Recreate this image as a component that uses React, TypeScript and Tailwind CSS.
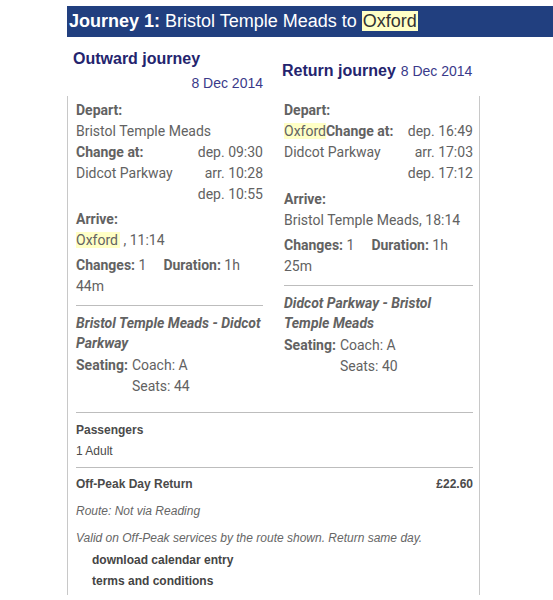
import React from "react";

const arial = { fontFamily: '"Liberation Sans", Arial, sans-serif' };
const roboto = { fontFamily: 'Roboto, "Liberation Sans", Arial, sans-serif' };

function Row({ left, right }: { left?: React.ReactNode; right?: React.ReactNode }) {
  return (
    <div className="flex justify-between h-[21px]">
      <div>{left}</div>
      <div>{right}</div>
    </div>
  );
}

export default function App() {
  return (
    <div className="w-[553px] h-[600px] bg-white overflow-hidden">
      <div className="pt-[6px] pl-[67px]">
        {/* Header bar */}
        <div
          className="h-[31px] bg-[#213f7f] text-white text-[18px] leading-[31px] pl-[2px] whitespace-nowrap"
          style={arial}
        >
          <span className="font-bold">Journey 1:</span> Bristol Temple Meads to{" "}
          <span className="bg-[#ffffc6] text-[#333] px-[1px]">Oxford</span>
        </div>

        {/* Headings */}
        <div className="flex h-[59px]" style={arial}>
          <div className="w-[196px] pt-[12px]">
            <div className="pl-[6px] text-[16px] leading-[20px] font-bold text-[#24246e]">
              Outward journey
            </div>
            <div className="mt-[6px] text-right text-[14px] leading-[16px] text-[#3a3a8a]">
              8 Dec 2014
            </div>
          </div>
          <div className="ml-[19px] pt-[24px] flex items-baseline gap-[5px]">
            <div className="text-[16px] leading-[20px] font-bold text-[#24246e]">Return journey</div>
            <div className="text-[14px] leading-[16px] text-[#3a3a8a]">8 Dec 2014</div>
          </div>
        </div>

        {/* Body box */}
        <div className="w-[413px] h-[499px] border-x border-[#c8c8c8] pl-[8px] pr-[6px] pt-[4px]">
          <div
            className="grid grid-cols-[187px_189px] gap-x-[21px] text-[14px] leading-[21px] text-[#626262]"
            style={roboto}
          >
            {/* Outward */}
            <div>
              <div className="font-bold">Depart:</div>
              <div>Bristol Temple Meads</div>
              <Row left={<span className="font-bold">Change at:</span>} right="dep. 09:30" />
              <Row left="Didcot Parkway" right="arr. 10:28" />
              <Row right="dep. 10:55" />
              <div className="mt-[4px]">
                <div className="font-bold">Arrive:</div>
                <div>
                  <span className="bg-[#ffffc6] pr-[2px]">Oxford</span> , 11:14
                </div>
              </div>
              <div className="mt-[4px]">
                <span className="font-bold">Changes:</span> 1
                <span className="ml-[17px] font-bold">Duration:</span> 1h
                <br />
                44m
              </div>
              <div className="mt-[8px] border-t border-[#bdbdbd]" />
              <div className="mt-[7px] font-bold italic leading-[20px]">
                Bristol Temple Meads - Didcot
                <br />
                Parkway
              </div>
              <div className="mt-[2px] flex">
                <span className="font-bold">Seating:</span>
                <div className="pl-[4px]">
                  <div>Coach: A</div>
                  <div>Seats: 44</div>
                </div>
              </div>
            </div>

            {/* Return */}
            <div>
              <div className="font-bold">Depart:</div>
              <Row
                left={
                  <>
                    <span className="bg-[#ffffc6]">Oxford</span>
                    <span className="font-bold">Change at:</span>
                  </>
                }
                right="dep. 16:49"
              />
              <Row left="Didcot Parkway" right="arr. 17:03" />
              <Row right="dep. 17:12" />
              <div className="mt-[5px]">
                <div className="font-bold">Arrive:</div>
                <div>Bristol Temple Meads, 18:14</div>
              </div>
              <div className="mt-[4px]">
                <span className="font-bold">Changes:</span> 1
                <span className="ml-[17px] font-bold">Duration:</span> 1h
                <br />
                25m
              </div>
              <div className="mt-[8px] border-t border-[#bdbdbd]" />
              <div className="mt-[7px] font-bold italic leading-[20px]">
                Didcot Parkway - Bristol
                <br />
                Temple Meads
              </div>
              <div className="mt-[2px] flex">
                <span className="font-bold">Seating:</span>
                <div className="pl-[4px]">
                  <div>Coach: A</div>
                  <div>Seats: 40</div>
                </div>
              </div>
            </div>
          </div>

          <div className="mt-[15px] w-[397px] border-t border-[#bdbdbd]" />

          <div className="w-[397px] text-[12px] leading-[21px] text-[#4a4a4a]" style={arial}>
            <div className="mt-[7px] font-bold">Passengers</div>
            <div>1 Adult</div>
            <div className="mt-[5px] border-t border-[#bdbdbd]" />
            <div className="mt-[6px] flex justify-between font-bold">
              <span>Off-Peak Day Return</span>
              <span>£22.60</span>
            </div>
            <div className="mt-[6px] italic text-[#666]">Route: Not via Reading</div>
            <div className="mt-[6px] italic text-[#666]">
              Valid on Off-Peak services by the route shown. Return same day.
            </div>
            <div className="mt-[1px] pl-[16px] font-bold text-[#444]">download calendar entry</div>
            <div className="pl-[16px] font-bold text-[#444]">terms and conditions</div>
          </div>
        </div>
      </div>
    </div>
  );
}
